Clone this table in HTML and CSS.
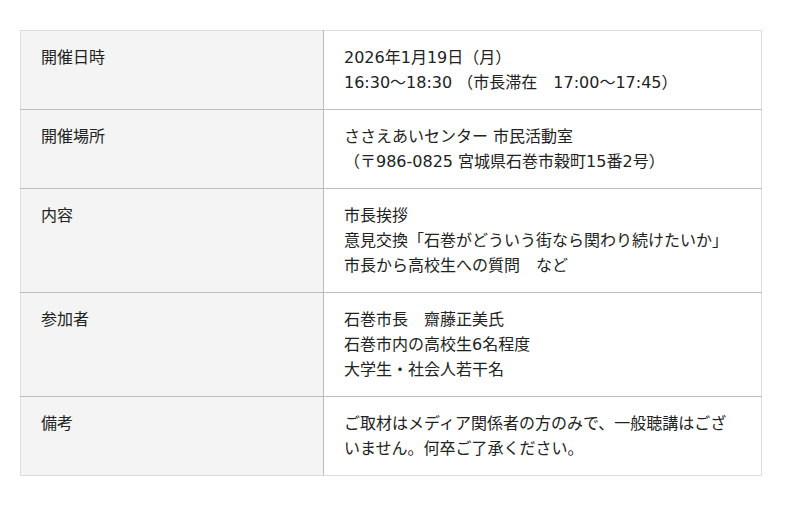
FILE: index.html
```html
<!DOCTYPE html>
<html lang="ja">
<head>
<meta charset="utf-8">
<link rel="stylesheet" href="styles.css">
</head>
<body>
<table class="info">
  <tr>
    <th>開催日時</th>
    <td>2026年1月19日（月）<br>16:30～18:30 （市長滞在　17:00～17:45）</td>
  </tr>
  <tr>
    <th>開催場所</th>
    <td>ささえあいセンター 市民活動室<br>（〒986-0825 宮城県石巻市穀町15番2号）</td>
  </tr>
  <tr>
    <th>内容</th>
    <td>市長挨拶<br>意見交換「石巻がどういう街なら関わり続けたいか」<br>市長から高校生への質問　など</td>
  </tr>
  <tr>
    <th>参加者</th>
    <td>石巻市長　齋藤正美氏<br>石巻市内の高校生6名程度<br>大学生・社会人若干名</td>
  </tr>
  <tr>
    <th>備考</th>
    <td>ご取材はメディア関係者の方のみで、一般聴講はございません。何卒ご了承ください。</td>
  </tr>
</table>
</body>
</html>
```
FILE: styles.css
```css
html, body {
  margin: 0;
  padding: 0;
  background: #fff;
}
body {
  padding: 30px 20px;
  font-family: "DejaVu Sans", "Noto Sans CJK JP", sans-serif;
  font-size: 16px;
  line-height: 25px;
  color: #222;
}
.info {
  width: 742px;
  border-collapse: collapse;
  border: 1px solid #dcdcdc;
}
.info th,
.info td {
  text-align: left;
  vertical-align: top;
  font-weight: normal;
  padding: 14px 20px;
  border-top: 1px solid #bcbcbc;
  border-bottom: 1px solid #bcbcbc;
}
.info tr:first-child th,
.info tr:first-child td {
  border-top: 1px solid #dcdcdc;
}
.info tr:last-child th,
.info tr:last-child td {
  border-bottom: 1px solid #dcdcdc;
}
.info th {
  width: 262px;
  background: #f4f4f4;
  border-right: 1px solid #bcbcbc;
}
.info td {
  background: #fff;
}
```
